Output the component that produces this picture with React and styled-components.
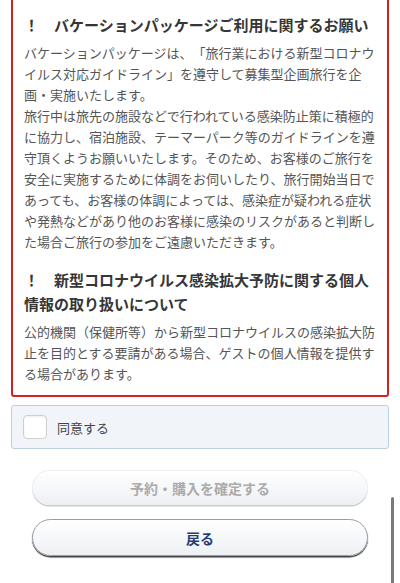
import React, { useState } from 'react'
import styled, { createGlobalStyle } from 'styled-components'

const sections = [
	{
		title: ['！　バケーションパッケージご利用に関するお願い'],
		paragraphs: [
			[
				'バケーションパッケージは、「旅行業における新型コロナウ',
				'イルス対応ガイドライン」を遵守して募集型企画旅行を企',
				'画・実施いたします。',
			],
			[
				'旅行中は旅先の施設などで行われている感染防止策に積極的',
				'に協力し、宿泊施設、テーマーパーク等のガイドラインを遵',
				'守頂くようお願いいたします。そのため、お客様のご旅行を',
				'安全に実施するために体調をお伺いしたり、旅行開始当日で',
				'あっても、お客様の体調によっては、感染症が疑われる症状',
				'や発熱などがあり他のお客様に感染のリスクがあると判断し',
				'た場合ご旅行の参加をご遠慮いただきます。',
			],
		],
	},
	{
		title: ['！　新型コロナウイルス感染拡大予防に関する個人', '情報の取り扱いについて'],
		paragraphs: [
			[
				'公的機関（保健所等）から新型コロナウイルスの感染拡大防',
				'止を目的とする要請がある場合、ゲストの個人情報を提供す',
				'る場合があります。',
			],
		],
	},
]

const App = () => {
	const [ agreed, setAgreed ] = useState(false)

	return (
		<Page lang="ja">
			<GlobalStyle />
			<Notice>
				{sections.map((section, i) => (
					<Section key={i}>
						<Heading>
							{section.title.map((line) => (
								<Line key={line}>{line}</Line>
							))}
						</Heading>
						{section.paragraphs.map((lines, j) => (
							<Paragraph key={j}>
								{lines.map((line) => (
									<Line key={line}>{line}</Line>
								))}
							</Paragraph>
						))}
					</Section>
				))}
			</Notice>

			<Agree>
				<Check
					type="checkbox"
					checked={agreed}
					onChange={() => setAgreed(!agreed)}
				/>
				<AgreeText>同意する</AgreeText>
			</Agree>

			<Buttons>
				<PillButton disabled={!agreed}>予約・購入を確定する</PillButton>
				<PillButton>戻る</PillButton>
			</Buttons>

			<ScrollThumb />
		</Page>
	)
}

const GlobalStyle = createGlobalStyle`
	html, body {
		margin: 0;
		padding: 0;
		background: #ffffff;
		overflow: hidden;
	}
	body {
		font-family: "Noto Sans CJK JP", "Noto Sans", sans-serif;
		text-spacing-trim: space-all;
	}
`

const Page = styled.div`
	width: 400px;
	height: 583px;
	overflow: hidden;
	display: flex;
	flex-direction: column;
`

const Notice = styled.div`
	margin: -4px 11px 0;
	padding: 15px 11px 11px;
	border: 2px solid #d2231e;
	border-radius: 3px;
`

const Section = styled.div`
	& + & {
		margin-top: 16px;
	}
`

const Heading = styled.h2`
	margin: 0 0 5px;
	font-size: 15px;
	line-height: 24px;
	font-weight: 700;
	color: #363636;
`

const Paragraph = styled.p`
	margin: 0;
	font-size: 13px;
	line-height: 21px;
	color: #555555;
`

const Line = styled.span`
	display: block;
	white-space: nowrap;
	text-spacing-trim: space-all;
`

const Agree = styled.label`
	margin: 8px 11px 0;
	height: 42px;
	padding: 0 11px;
	display: flex;
	align-items: center;
	gap: 10px;
	background: #f1f5fa;
	border: 1px solid #bccfe0;
	border-radius: 3px;
	cursor: pointer;
`

const Check = styled.input`
	appearance: none;
	margin: 0;
	width: 24px;
	height: 24px;
	background: #ffffff;
	border: 1px solid #cfcfcf;
	border-radius: 4px;
	box-shadow: inset 0 1px 2px rgba(0, 0, 0, 0.08);

	&:checked {
		background: #2b5ba8;
		border-color: #2b5ba8;
	}
`

const AgreeText = styled.span`
	font-size: 13px;
	color: #444444;
`

const Buttons = styled.div`
	margin: 21px 32px 0;
	display: flex;
	flex-direction: column;
	gap: 14px;
`

const PillButton = styled.button`
	height: ${({ disabled }) => (disabled ? '35px' : '37px')};
	border-radius: 20px;
	font-family: inherit;
	font-size: 14px;
	font-weight: 700;
	color: ${({ disabled }) => (disabled ? '#ababab' : '#1f3d7a')};
	background: linear-gradient(#ffffff, #edf0f4);
	border: 1px solid ${({ disabled }) => (disabled ? '#eceef1' : '#9c9c9c')};
	box-shadow: ${({ disabled }) =>
		disabled ? '0 1.5px 0 #c9ccd1' : '0 1.5px 1px #3e3e3e'};
	cursor: ${({ disabled }) => (disabled ? 'default' : 'pointer')};
`

const ScrollThumb = styled.div`
	position: fixed;
	right: 6px;
	top: 497px;
	width: 3px;
	height: 90px;
	background: #7a7a7a;
	border-radius: 2px;
`

export default App
